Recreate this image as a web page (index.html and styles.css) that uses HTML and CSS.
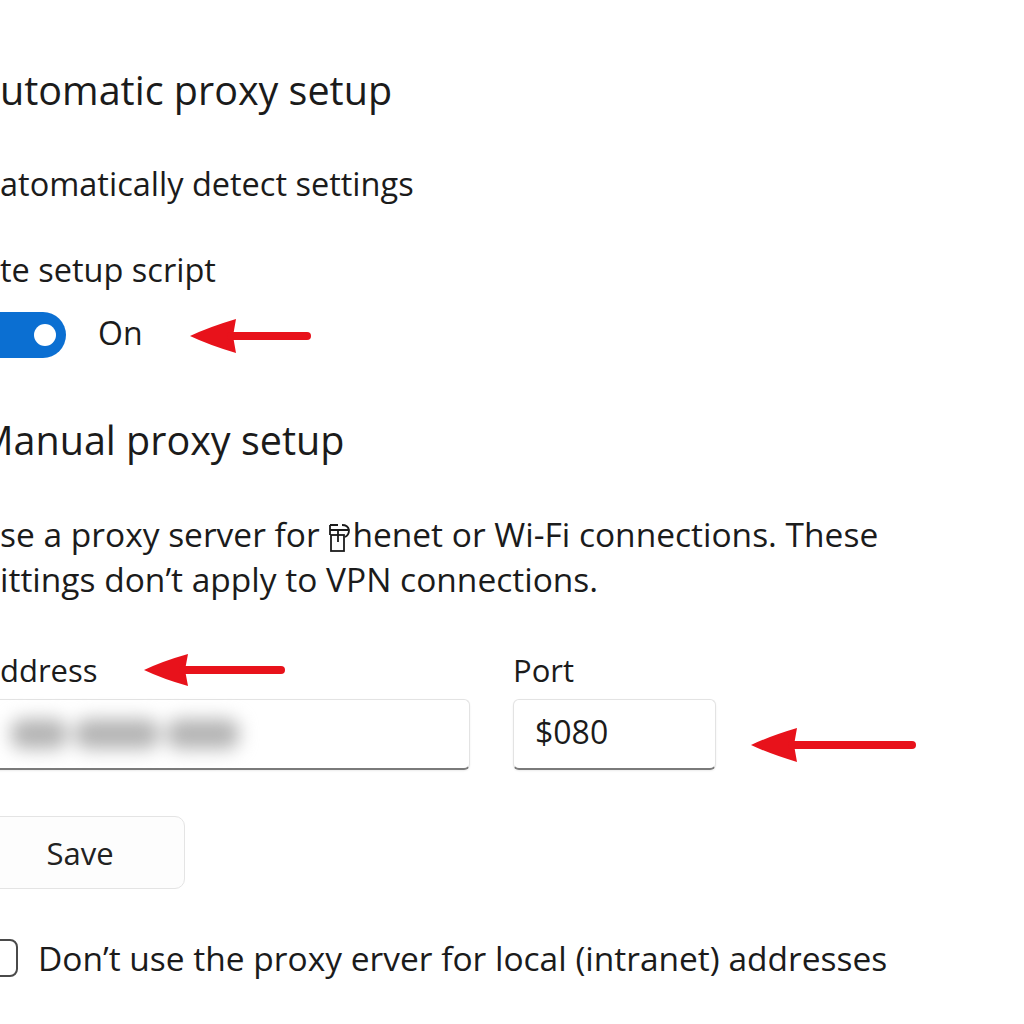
FILE: index.html
```html
<!DOCTYPE html>
<html>
<head>
  <title>Proxy</title>
  <link rel="stylesheet" href="styles.css">
</head>
<body>
  <main class="panel">
    <h2 class="section-title">utomatic proxy setup</h2>
    <div class="setting-label first">atomatically detect settings</div>
    <div class="setting-label">te setup script</div>

    <div class="toggle-row">
      <span class="toggle"><span class="knob"></span></span>
      <span class="toggle-text">On</span>
      <svg class="arrow arrow-toggle" viewBox="0 0 124 36" width="124" height="36">
        <path d="M1 18 Q20 9 47 1 L44 18 L47 35 Q20 27 1 18 Z" fill="#e8121b"/>
        <line x1="42" y1="18" x2="118" y2="18" stroke="#e8121b" stroke-width="8" stroke-linecap="round"/>
      </svg>
    </div>

    <h2 class="section-title manual">Manual proxy setup</h2>

    <p class="description">
      <span class="line">se a proxy server for <svg class="tofu" viewBox="0 0 26 32" width="26" height="32"><path d="M2 4 L2 14 M2 4 L10 4 M2 9 L20 9 M14 4 Q20 4 21 9 Q21 14 17 16" fill="none" stroke="#1b1b1b" stroke-width="1.8"/><rect x="3" y="14" width="13" height="16" fill="none" stroke="#1b1b1b" stroke-width="1.8"/><line x1="10" y1="9" x2="10" y2="21" stroke="#1b1b1b" stroke-width="1.8"/></svg>henet or Wi-Fi connections. These</span>
      <span class="line">ittings don’t apply to VPN connections.</span>
    </p>

    <div class="fields">
      <div class="field address">
        <div class="field-label">ddress
          <svg class="arrow" viewBox="0 0 144 34" width="144" height="34">
            <path d="M1 17 Q20 8 45 1 L42 17 L45 33 Q20 26 1 17 Z" fill="#e8121b"/>
            <line x1="40" y1="17" x2="138" y2="17" stroke="#e8121b" stroke-width="8" stroke-linecap="round"/>
          </svg>
        </div>
        <div class="input-box">
          <div class="blurred"><span class="w1"></span><span class="w2"></span><span class="w3"></span></div>
        </div>
      </div>
      <div class="field port">
        <div class="field-label">Port</div>
        <div class="port-row">
          <div class="input-box port-box">$080</div>
          <svg class="arrow arrow-port" viewBox="0 0 168 36" width="168" height="36">
            <path d="M1 18 Q20 9 47 1 L44 18 L47 35 Q20 27 1 18 Z" fill="#e8121b"/>
            <line x1="42" y1="18" x2="162" y2="18" stroke="#e8121b" stroke-width="8" stroke-linecap="round"/>
          </svg>
        </div>
      </div>
    </div>

    <button class="save-btn">Save</button>

    <label class="check-row">
      <span class="checkbox"></span>
      <span>Don’t use the proxy erver for local (intranet) addresses</span>
    </label>
  </main>
</body>
</html>
```

FILE: styles.css
```css
body {
  margin: 0;
  background: #ffffff;
  font-family: 'Open Sans', 'Noto Sans', sans-serif;
  color: #1b1b1b;
  overflow: hidden;
}
.panel {
  padding-top: 66px;
}
.section-title {
  font-size: 39.5px;
  font-weight: 400;
  line-height: 48px;
  margin: 0;
  white-space: nowrap;
}
.section-title.manual {
  margin: 58px 0 0 -22px;
}
.setting-label {
  font-size: 32.5px;
  line-height: 40px;
  margin-top: 46px;
  white-space: nowrap;
}
.setting-label.first {
  margin-top: 50px;
}
.toggle-row {
  display: flex;
  align-items: center;
  margin-top: 22px;
  height: 46px;
}
.toggle {
  width: 90px;
  height: 46px;
  margin-left: -24px;
  border-radius: 23px;
  background: #0b6fd2;
  display: flex;
  align-items: center;
  justify-content: flex-end;
  padding-right: 10px;
  box-sizing: border-box;
}
.knob {
  width: 22px;
  height: 22px;
  border-radius: 50%;
  background: #ffffff;
}
.toggle-text {
  font-size: 32px;
  margin-left: 32px;
  margin-top: -5px;
}
.arrow {
  display: block;
}
.arrow-toggle {
  margin-left: 46px;
  margin-top: 2px;
}
.description {
  margin: 48px 0 0;
  font-size: 33.5px;
  line-height: 45px;
}
.line {
  display: block;
  white-space: nowrap;
}
.tofu {
  vertical-align: -6px;
  margin-right: -2px;
}
.fields {
  display: flex;
  gap: 43px;
  margin-top: 48px;
}
.field-label {
  font-size: 31px;
  line-height: 40px;
  height: 40px;
  display: flex;
  align-items: center;
  gap: 45px;
  margin-bottom: 9px;
}
.address {
  width: 500px;
  margin-left: -30px;
}
.address .field-label {
  padding-left: 30px;
}
.input-box {
  height: 71px;
  box-sizing: border-box;
  border: 1px solid #e3e3e3;
  border-bottom: 2px solid #7a7a7a;
  border-radius: 6px;
  background: #ffffff;
  box-shadow: 0 1px 2px rgba(0, 0, 0, 0.08);
  display: flex;
  align-items: center;
}
.blurred {
  display: flex;
  gap: 8px;
  margin-left: 40px;
  filter: blur(9px);
}
.blurred span {
  height: 30px;
  background: #b4b4b4;
  border-radius: 12px;
}
.blurred .w1 { width: 56px; }
.blurred .w2 { width: 84px; }
.blurred .w3 { width: 72px; }
.port-row {
  display: flex;
  align-items: center;
}
.port-box {
  width: 203px;
  padding-left: 21px;
  padding-bottom: 6px;
  font-size: 32px;
}
.arrow-port {
  margin-left: 34px;
  margin-top: 20px;
}
.save-btn {
  display: block;
  margin: 46px 0 0 -30px;
  width: 215px;
  height: 73px;
  padding: 0 0 0 5px;
  border: 1px solid #e4e4e4;
  border-radius: 10px;
  background: #fdfdfd;
  font-family: 'Open Sans', 'Noto Sans', sans-serif;
  font-size: 31px;
  color: #222222;
}
.check-row {
  display: flex;
  align-items: center;
  margin-top: 48px;
  height: 42px;
  font-size: 33.5px;
  white-space: nowrap;
}
.checkbox {
  width: 40px;
  height: 38px;
  margin-left: -22px;
  margin-right: 20px;
  box-sizing: border-box;
  border: 2px solid #4a4a4a;
  border-radius: 8px;
}
```
